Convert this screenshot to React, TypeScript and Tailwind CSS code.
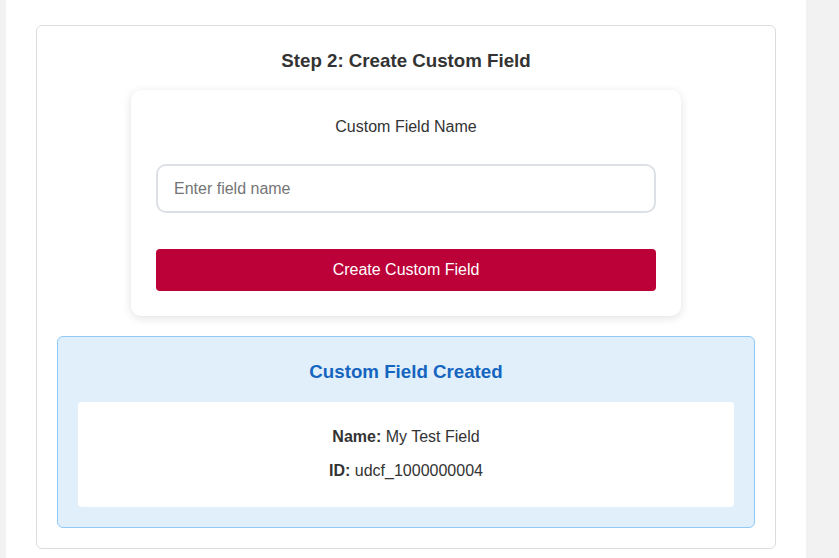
import { useState } from "react";

export default function App() {
  const [fieldName, setFieldName] = useState("");

  return (
    <div
      className="min-h-[558px] bg-[#f2f2f2] text-[#333]"
      style={{ fontFamily: '"Liberation Sans", Arial, sans-serif' }}
    >
      <div className="ml-[6px] min-h-[558px] w-[800px] bg-white px-[30px] pt-[25px]">
        {/* Step card */}
        <div className="rounded-[6px] border border-[#dcdcdc] px-[20px] pb-[20px] pt-[24px]">
          <h3 className="mb-[19px] text-center text-[18.72px] font-bold leading-[21px] text-[#333]">
            Step 2: Create Custom Field
          </h3>

          {/* Form card */}
          <div className="mx-auto w-[550px] rounded-[10px] bg-white px-[25px] pb-[25px] pt-[28px] shadow-[0_2px_10px_rgba(0,0,0,0.12)]">
            <label className="block text-center text-[16px] leading-[18px] text-[#333]">
              Custom Field Name
            </label>
            <input
              type="text"
              value={fieldName}
              onChange={(e) => setFieldName(e.target.value)}
              placeholder="Enter field name"
              className="mt-[28px] block h-[49px] w-full rounded-[10px] border-2 border-[#dde1e6] px-[16px] text-[16px] text-[#333] outline-none placeholder:text-[#757575]"
            />
            <button
              type="button"
              className="mt-[36px] block h-[42px] w-full rounded-[4px] bg-[#bc0038] text-[16px] text-white"
            >
              Create Custom Field
            </button>
          </div>

          {/* Result */}
          <div className="mt-[20px] rounded-[6px] border border-[#90caf9] bg-[#e0effa] p-[20px]">
            <h4 className="mb-[20px] mt-[4px] text-center text-[18.72px] font-bold leading-[21px] text-[#1565c0]">
              Custom Field Created
            </h4>
            <div className="rounded-[4px] bg-white pb-[14px] pt-[13px] text-center text-[16px]">
              <p className="my-[10px] leading-6">
                <strong>Name:</strong> My Test Field
              </p>
              <p className="my-[10px] leading-6">
                <strong>ID:</strong> udcf_1000000004
              </p>
            </div>
          </div>
        </div>
      </div>
    </div>
  );
}
